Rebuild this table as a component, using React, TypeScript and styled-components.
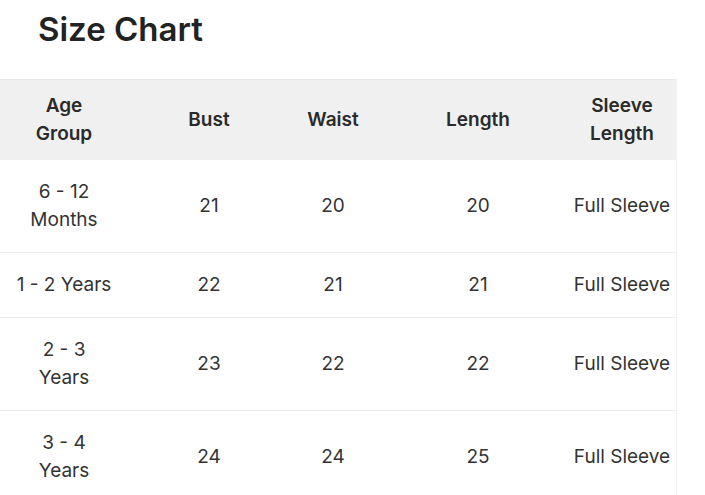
import styled, { createGlobalStyle } from 'styled-components';

const GlobalStyle = createGlobalStyle`
  body {
    margin: 0;
    background: #ffffff;
    font-family: Inter, 'Liberation Sans', sans-serif;
    color: #333333;
  }
`;

const Page = styled.div`
  width: 705px;
  overflow: hidden;
`;

const Title = styled.h2`
  margin: 0;
  padding: 10px 0 0 38px;
  font-size: 33px;
  line-height: 38px;
  font-weight: 600;
  color: #222222;
`;

const Table = styled.table`
  margin: 31px 0 0 -12px;
  width: 688px;
  border-collapse: collapse;
  table-layout: fixed;
  border-top: 1px solid #e6e6e6;
  border-right: 1px solid #f2f2f2;
`;

const HeadRow = styled.tr`
  background: #f0f0f0;
`;

const HeadCell = styled.th<{ $w: number }>`
  width: ${p => p.$w}px;
  padding: 12px 0 12px;
  font-size: 19px;
  line-height: 28px;
  font-weight: 600;
  color: #2a2a2a;
  text-align: center;
  white-space: nowrap;
`;

const BodyRow = styled.tr`
  border-bottom: 1px solid #ececec;
`;

const Cell = styled.td`
  padding: 18px 0;
  font-size: 19px;
  line-height: 28px;
  font-weight: 400;
  color: #333333;
  text-align: center;
  white-space: nowrap;
`;

const COLUMNS = [
  { w: 152, label: ['Age', 'Group'] },
  { w: 138, label: ['Bust'] },
  { w: 110, label: ['Waist'] },
  { w: 180, label: ['Length'] },
  { w: 108, label: ['Sleeve', 'Length'] },
];

const ROWS = [
  { age: ['6 - 12', 'Months'], bust: 21, waist: 20, length: 20 },
  { age: ['1 - 2 Years'], bust: 22, waist: 21, length: 21 },
  { age: ['2 - 3', 'Years'], bust: 23, waist: 22, length: 22 },
  { age: ['3 - 4', 'Years'], bust: 24, waist: 24, length: 25 },
];

const Lines = ({ lines }: { lines: string[] }) => (
  <>
    {lines.map((l, i) => (
      <span key={l}>
        {i > 0 && <br />}
        {l}
      </span>
    ))}
  </>
);

function App() {
  return (
    <Page>
      <GlobalStyle />
      <Title>Size Chart</Title>
      <Table>
        <thead>
          <HeadRow>
            {COLUMNS.map(c => (
              <HeadCell key={c.label.join(' ')} $w={c.w}>
                <Lines lines={c.label} />
              </HeadCell>
            ))}
          </HeadRow>
        </thead>
        <tbody>
          {ROWS.map(r => (
            <BodyRow key={r.age.join(' ')}>
              <Cell>
                <Lines lines={r.age} />
              </Cell>
              <Cell>{r.bust}</Cell>
              <Cell>{r.waist}</Cell>
              <Cell>{r.length}</Cell>
              <Cell>Full Sleeve</Cell>
            </BodyRow>
          ))}
        </tbody>
      </Table>
    </Page>
  );
}

export default App;
